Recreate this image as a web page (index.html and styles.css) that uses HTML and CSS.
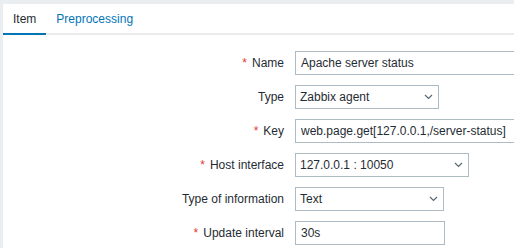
FILE: index.html
```html
<!DOCTYPE html>
<html lang="en">
<head>
<meta charset="utf-8">
<title>Item</title>
<link rel="stylesheet" href="styles.css">
</head>
<body>
<div class="page">
  <div class="panel">
    <ul class="tabs">
      <li class="tab active">Item</li>
      <li class="tab"><a href="#">Preprocessing</a></li>
    </ul>
    <form class="form">
      <label class="label req" for="name">Name</label>
      <div class="field"><input id="name" class="input w-name" type="text" value="Apache server status"></div>

      <label class="label" for="type">Type</label>
      <div class="field"><span class="select w-type"><span class="sel-text">Zabbix agent</span><svg class="chev" width="9" height="6" viewBox="0 0 9 6"><polyline points="1,1 4.5,4.5 8,1" fill="none" stroke="#5a6770" stroke-width="1.2"/></svg></span></div>

      <label class="label req" for="key">Key</label>
      <div class="field"><input id="key" class="input w-name" type="text" value="web.page.get[127.0.0.1,/server-status]"></div>

      <label class="label req">Host interface</label>
      <div class="field"><span class="select w-host"><span class="sel-text">127.0.0.1 : 10050</span><svg class="chev" width="9" height="6" viewBox="0 0 9 6"><polyline points="1,1 4.5,4.5 8,1" fill="none" stroke="#5a6770" stroke-width="1.2"/></svg></span></div>

      <label class="label">Type of information</label>
      <div class="field"><span class="select w-info"><span class="sel-text">Text</span><svg class="chev" width="9" height="6" viewBox="0 0 9 6"><polyline points="1,1 4.5,4.5 8,1" fill="none" stroke="#5a6770" stroke-width="1.2"/></svg></span></div>

      <label class="label req" for="delay">Update interval</label>
      <div class="field"><input id="delay" class="input w-int" type="text" value="30s"></div>
    </form>
  </div>
</div>
</body>
</html>
```
FILE: styles.css
```css
html, body {
  margin: 0;
  padding: 0;
  overflow: hidden;
}
body {
  background: #ebeef0;
  font-family: "Liberation Sans", Arial, sans-serif;
  font-size: 12px;
  color: #1f2c33;
}
.page {
  padding: 4px 0 0 3px;
  height: 244px;
}
.panel {
  background: #ffffff;
  height: 100%;
  overflow: hidden;
}
.tabs {
  list-style: none;
  margin: 0;
  padding: 0;
  display: flex;
  border-bottom: 2px solid #ebebeb;
}
.tab {
  padding: 8px 10px 7px;
  line-height: 14px;
  margin-bottom: -2px;
  border-bottom: 2px solid transparent;
}
.tab.active {
  border-bottom-color: #0275b8;
  color: #1f2c33;
}
.tab a {
  color: #0275b8;
  text-decoration: none;
}
.form {
  display: grid;
  grid-template-columns: 281px minmax(0, 1fr);
  column-gap: 11px;
  row-gap: 10px;
  align-items: center;
  padding-top: 16px;
}
.label {
  text-align: right;
  line-height: 14px;
  white-space: nowrap;
}
.label.req::before {
  content: "*";
  color: #e33734;
  margin-right: 5px;
}
.field {
  display: flex;
  white-space: nowrap;
  overflow: hidden;
}
.input {
  box-sizing: border-box;
  height: 24px;
  margin: 0;
  padding: 0 5px;
  border: 1px solid #acbbc4;
  border-radius: 0;
  background: #ffffff;
  font-family: "Liberation Sans", Arial, sans-serif;
  font-size: 12px;
  color: #1f2c33;
  outline: none;
  flex: none;
}
.select {
  position: relative;
  box-sizing: border-box;
  display: flex;
  align-items: center;
  height: 24px;
  padding: 0 20px 0 4px;
  border: 1px solid #acbbc4;
  background: #ffffff;
  flex: none;
}
.sel-text {
  line-height: 14px;
}
.chev {
  position: absolute;
  right: 5px;
  top: 8px;
}
.w-name { width: 453px; }
.w-type { width: 144px; }
.w-host { width: 174px; }
.w-info { width: 149px; }
.w-int { width: 150px; }
```
